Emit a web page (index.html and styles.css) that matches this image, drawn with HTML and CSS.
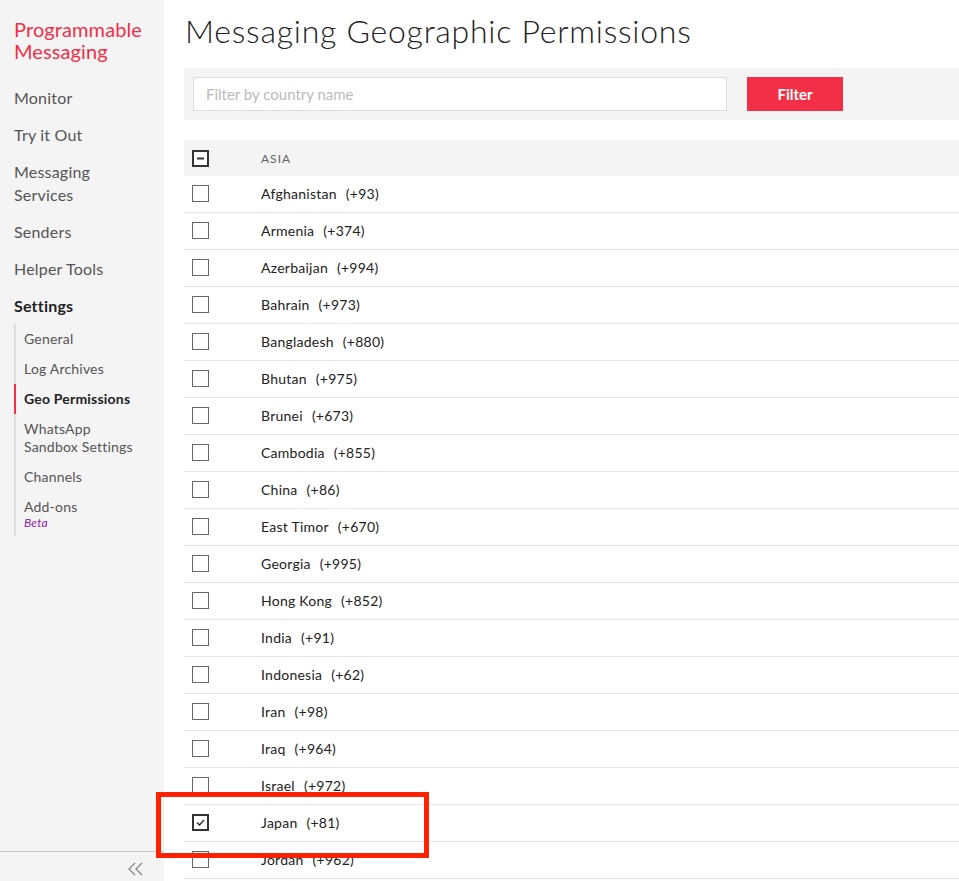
FILE: index.html
```html
<!DOCTYPE html>
<html lang="en">
<head>
<meta charset="utf-8">
<title>Messaging Geographic Permissions</title>
<link rel="stylesheet" href="styles.css">
</head>
<body>
<div class="app">
  <aside class="sidebar">
    <div class="side-top">
      <div class="product">Programmable Messaging</div>
      <nav class="nav">
        <a class="nav-item">Monitor</a>
        <a class="nav-item">Try it Out</a>
        <a class="nav-item">Messaging Services</a>
        <a class="nav-item">Senders</a>
        <a class="nav-item">Helper Tools</a>
        <a class="nav-item current">Settings</a>
        <div class="subnav">
          <a class="sub-item">General</a>
          <a class="sub-item">Log Archives</a>
          <a class="sub-item active">Geo Permissions</a>
          <a class="sub-item">WhatsApp Sandbox Settings</a>
          <a class="sub-item">Channels</a>
          <a class="sub-item">Add-ons<span class="beta">Beta</span></a>
        </div>
      </nav>
    </div>
    <div class="collapse">
      <svg width="18" height="14" viewBox="0 0 18 14" aria-hidden="true"><path d="M8 1 L2 7 L8 13 M15 1 L9 7 L15 13" fill="none" stroke="#8a8a8a" stroke-width="1.4"/></svg>
    </div>
  </aside>
  <main class="main">
    <h1 class="title">Messaging Geographic Permissions</h1>
    <div class="filter-bar">
      <input class="filter-input" type="text" placeholder="Filter by country name">
      <button class="filter-btn">Filter</button>
    </div>
    <div class="table">
      <div class="row head">
        <span class="cb cb-dark"><svg width="9" height="9" viewBox="0 0 9 9"><path d="M1 4.5 H8" stroke="#333" stroke-width="2"/></svg></span>
        <span class="region">Asia</span>
      </div>
      <div class="row"><span class="cb"></span><span class="country">Afghanistan<span class="code">(+93)</span></span></div>
      <div class="row"><span class="cb"></span><span class="country">Armenia<span class="code">(+374)</span></span></div>
      <div class="row"><span class="cb"></span><span class="country">Azerbaijan<span class="code">(+994)</span></span></div>
      <div class="row"><span class="cb"></span><span class="country">Bahrain<span class="code">(+973)</span></span></div>
      <div class="row"><span class="cb"></span><span class="country">Bangladesh<span class="code">(+880)</span></span></div>
      <div class="row"><span class="cb"></span><span class="country">Bhutan<span class="code">(+975)</span></span></div>
      <div class="row"><span class="cb"></span><span class="country">Brunei<span class="code">(+673)</span></span></div>
      <div class="row"><span class="cb"></span><span class="country">Cambodia<span class="code">(+855)</span></span></div>
      <div class="row"><span class="cb"></span><span class="country">China<span class="code">(+86)</span></span></div>
      <div class="row"><span class="cb"></span><span class="country">East Timor<span class="code">(+670)</span></span></div>
      <div class="row"><span class="cb"></span><span class="country">Georgia<span class="code">(+995)</span></span></div>
      <div class="row"><span class="cb"></span><span class="country">Hong Kong<span class="code">(+852)</span></span></div>
      <div class="row"><span class="cb"></span><span class="country">India<span class="code">(+91)</span></span></div>
      <div class="row"><span class="cb"></span><span class="country">Indonesia<span class="code">(+62)</span></span></div>
      <div class="row"><span class="cb"></span><span class="country">Iran<span class="code">(+98)</span></span></div>
      <div class="row"><span class="cb"></span><span class="country">Iraq<span class="code">(+964)</span></span></div>
      <div class="row"><span class="cb"></span><span class="country">Israel<span class="code">(+972)</span></span></div>
      <div class="row"><span class="cb cb-dark"><svg width="9" height="7" viewBox="0 0 9 7"><path d="M1 3.5 L3.5 6 L8 1" fill="none" stroke="#333" stroke-width="1.5"/></svg></span><span class="country">Japan<span class="code">(+81)</span></span></div>
      <div class="row"><span class="cb"></span><span class="country">Jordan<span class="code">(+962)</span></span></div>
    </div>
  </main>
  <div class="highlight"></div>
</div>
</body>
</html>
```
FILE: styles.css
```css
* { box-sizing: border-box; }
html, body { margin: 0; padding: 0; height: 100%; overflow: hidden; }
body {
  font-family: Lato, "Open Sans", "Liberation Sans", sans-serif;
  color: #222;
  background: #fff;
}
.app {
  display: flex;
  height: 100vh;
  position: relative;
}
.sidebar {
  width: 164px;
  flex: 0 0 164px;
  background: #f4f4f4;
  display: flex;
  flex-direction: column;
  justify-content: space-between;
}
.side-top { padding: 18px 0 0 14px; }
.product {
  color: #f22f46;
  font-size: 20px;
  line-height: 22px;
  margin-bottom: 17px;
  letter-spacing: 0.1px;
}
.nav { display: flex; flex-direction: column; }
.nav-item {
  font-size: 16px;
  line-height: 23px;
  color: #555;
  padding: 7px 0;
  display: block;
  max-width: 122px;
  letter-spacing: 0.2px;
}
.nav-item.current { color: #222; font-weight: 700; }
.subnav {
  border-left: 2px solid #ddd;
  display: flex;
  flex-direction: column;
}
.sub-item {
  font-size: 14px;
  line-height: 18px;
  color: #555;
  padding: 6px 28px 6px 8px;
  margin-left: -2px;
  border-left: 2px solid transparent;
  display: block;
  letter-spacing: 0.2px;
}
.sub-item.active {
  border-left-color: #f22f46;
  color: #222;
  font-weight: 700;
}
.beta {
  display: block;
  font-size: 12px;
  line-height: 14px;
  font-style: italic;
  color: #8c1ba8;
}
.collapse {
  border-top: 1px solid #c8c8c8;
  height: 30px;
  display: flex;
  justify-content: flex-end;
  align-items: center;
  padding: 4px 19px 0 0;
}
.main {
  flex: 1;
  padding: 0 0 0 20px;
  overflow: hidden;
}
.title {
  font-weight: 300;
  font-size: 32px;
  line-height: 40px;
  letter-spacing: 0.75px;
  margin: 11px 0 17px 1px;
  color: #222;
}
.filter-bar {
  background: #f4f4f4;
  display: flex;
  align-items: center;
  padding: 9px 9px;
  height: 52px;
}
.filter-input {
  width: 534px;
  height: 34px;
  border: 1px solid #ddd;
  background: #fff;
  padding: 0 12px;
  font-family: inherit;
  font-size: 15px;
  color: #222;
  outline: none;
}
.filter-input::placeholder { color: #bbb; }
.filter-btn {
  margin-left: 20px;
  width: 96px;
  height: 34px;
  border: 0;
  background: #f22f46;
  color: #fff;
  font-family: inherit;
  font-size: 15px;
  font-weight: 700;
}
.table { margin-top: 20px; }
.row {
  display: flex;
  align-items: center;
  height: 37px;
  padding-left: 8px;
  padding-bottom: 1px;
  border-bottom: 1px solid #e4e4e4;
}
.row.head {
  background: #f4f4f4;
  height: 36px;
  padding-bottom: 0;
  border-bottom: 0;
}
.cb {
  width: 17px;
  height: 17px;
  border: 1px solid #666;
  background: #fff;
  flex: 0 0 17px;
  display: flex;
  align-items: center;
  justify-content: center;
  margin-right: 52px;
}
.cb-dark { border: 2px solid #333; }
.region {
  font-size: 12px;
  letter-spacing: 1px;
  text-transform: uppercase;
  color: #666;
}
.country { font-size: 14px; color: #222; letter-spacing: 0.25px; }
.code { margin-left: 9px; }
.highlight {
  position: absolute;
  left: 156px;
  top: 792px;
  width: 273px;
  height: 66px;
  border: 5px solid #ff2200;
  pointer-events: none;
}
```
